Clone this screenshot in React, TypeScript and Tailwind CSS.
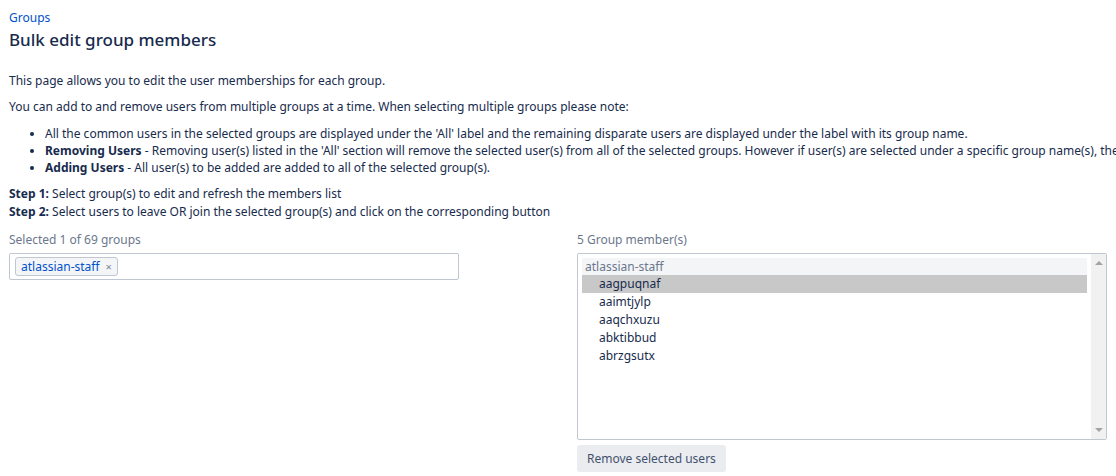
import React from 'react';

const MEMBERS = ['aagpuqnaf', 'aaimtjylp', 'aaqchxuzu', 'abktibbud', 'abrzgsutx'];

const font = 'font-["Segoe_UI","Noto_Sans",sans-serif]';

export default function App() {
  return (
    <div className={`w-[1116px] h-[476px] overflow-hidden bg-white text-[#172b4d] ${font}`}>
      <div className="pl-[9px] pt-[10px]">
        <a className="block text-[12px] leading-[16px] text-[#0052cc]">Groups</a>
        <h1 className="mt-[3px] text-[17px] leading-[22px] font-medium text-[#172b4d]">Bulk edit group members</h1>

        <div className="mt-[21px] text-[12px] leading-[17px]">
          <p>This page allows you to edit the user memberships for each group.</p>
          <p className="mt-[9px]">
            You can add to and remove users from multiple groups at a time. When selecting multiple groups please note:
          </p>
          <ul className="mt-[10px] list-disc pl-[36px] whitespace-nowrap">
            <li>
              All the common users in the selected groups are displayed under the 'All' label and the remaining disparate users are displayed under the label with its group name.
            </li>
            <li>
              <b>Removing Users</b> - Removing user(s) listed in the 'All' section will remove the selected user(s) from all of the selected groups. However if user(s) are selected under a specific group name(s), the s
            </li>
            <li>
              <b>Adding Users</b> - All user(s) to be added are added to all of the selected group(s).
            </li>
          </ul>
          <p className="mt-[9px] leading-[18px]">
            <b>Step 1:</b> Select group(s) to edit and refresh the members list
            <br />
            <b>Step 2:</b> Select users to leave OR join the selected group(s) and click on the corresponding button
          </p>
        </div>

        <div className="mt-[10px] flex">
          <div className="w-[450px]">
            <div className="text-[12px] leading-[18px] text-[#6b778c]">Selected 1 of 69 groups</div>
            <div className="mt-[4px] h-[27px] border border-[#c1c7d0] rounded-[2px] flex items-center px-[5px]">
              <span className="flex items-center h-[19px] px-[5px] bg-[#f4f5f7] border border-[#c1c7d0] rounded-[3px] text-[12px] leading-[17px] text-[#0052cc]">
                atlassian-staff
                <span className="ml-[6px] text-[11px] text-[#7a869a]">×</span>
              </span>
            </div>
          </div>

          <div className="ml-[118px] w-[530px]">
            <div className="text-[12px] leading-[18px] text-[#6b778c]">5 Group member(s)</div>
            <div className="mt-[4px] h-[187px] border border-[#c1c7d0] rounded-[2px] flex">
              <div className="flex-1 pt-[4px] pl-[4px] pr-[4px] text-[12px]">
                <div className="h-[17px] leading-[17px] bg-[#f4f5f7] px-[3px] text-[#6b778c]">atlassian-staff</div>
                {MEMBERS.map((m, i) => (
                  <div
                    key={m}
                    className={`h-[18px] leading-[18px] pl-[17px] text-[#172b4d] ${i === 0 ? 'bg-[#c8c8c8]' : ''}`}
                  >
                    {m}
                  </div>
                ))}
              </div>
              <div className="w-[15px] bg-[#f1f1f1] flex flex-col justify-between items-center py-[7px]">
                <span className="w-0 h-0 border-l-[4px] border-r-[4px] border-b-[4px] border-l-transparent border-r-transparent border-b-[#a3a3a3]" />
                <span className="w-0 h-0 border-l-[4px] border-r-[4px] border-t-[4px] border-l-transparent border-r-transparent border-t-[#a3a3a3]" />
              </div>
            </div>
            <button className="mt-[5px] h-[27px] px-[10px] bg-[#ebecf0] rounded-[3px] text-[12px] text-[#42526e]">
              Remove selected users
            </button>
          </div>
        </div>
      </div>
    </div>
  );
}
